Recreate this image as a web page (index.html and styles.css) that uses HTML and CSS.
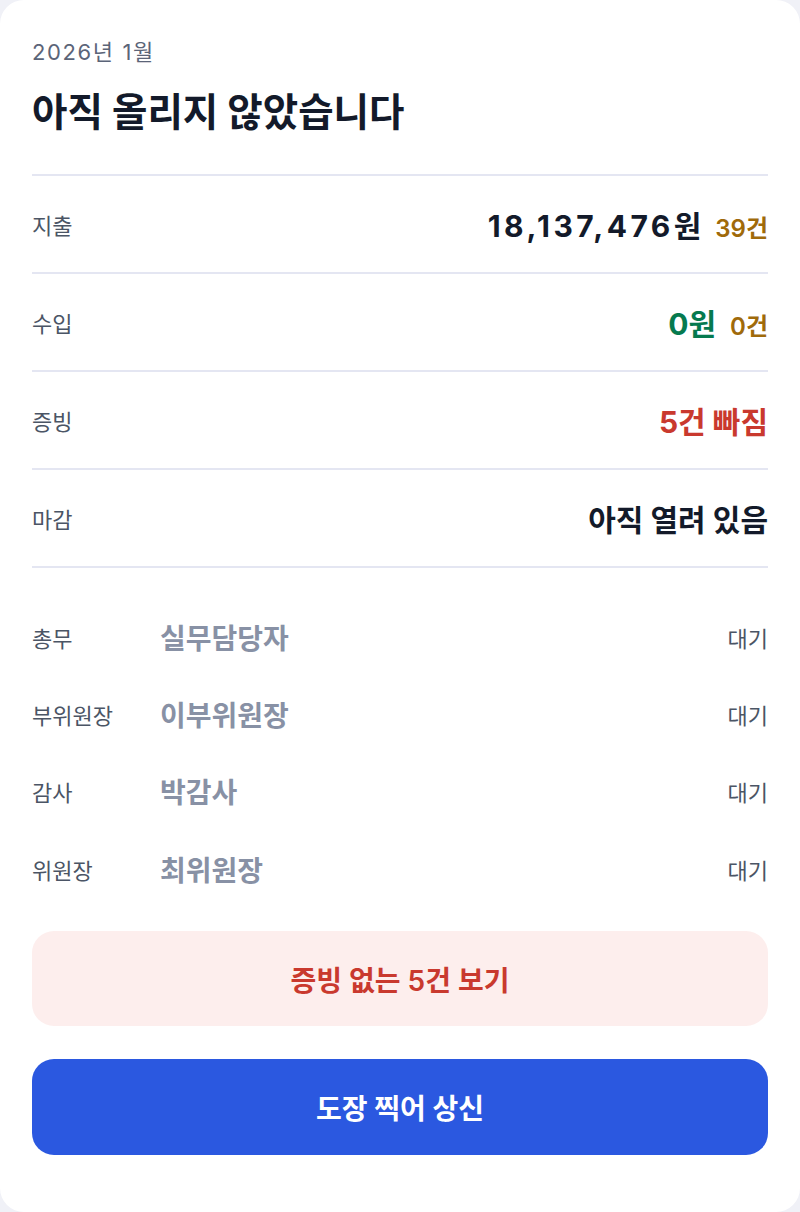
FILE: index.html
```html
<!DOCTYPE html>
<html lang="ko">
<head>
    <meta charset="UTF-8">
    <meta name="viewport" content="width=device-width, initial-scale=1.0">
    <title>2026년 1월 결산</title>
    <link rel="stylesheet" href="styles.css">
</head>
<body>
    <div class="card">
        <div class="header">
            <div class="period">2026년 1월</div>
            <h1 class="title">아직 올리지 않았습니다</h1>
        </div>

        <div class="summary">
            <div class="row">
                <span class="label">지출</span>
                <span class="value"><b class="amount"><span class="num">18,137,476</span>원</b><span class="count">39건</span></span>
            </div>
            <div class="row">
                <span class="label">수입</span>
                <span class="value"><b class="amount amount-in">0원</b><span class="count">0건</span></span>
            </div>
            <div class="row">
                <span class="label">증빙</span>
                <span class="value"><b class="amount amount-missing">5건 빠짐</b></span>
            </div>
            <div class="row">
                <span class="label">마감</span>
                <span class="value"><b class="amount">아직 열려 있음</b></span>
            </div>
        </div>

        <div class="approvals">
            <div class="step">
                <span class="role">총무</span>
                <span class="person">실무담당자</span>
                <span class="state">대기</span>
            </div>
            <div class="step">
                <span class="role">부위원장</span>
                <span class="person">이부위원장</span>
                <span class="state">대기</span>
            </div>
            <div class="step">
                <span class="role">감사</span>
                <span class="person">박감사</span>
                <span class="state">대기</span>
            </div>
            <div class="step">
                <span class="role">위원장</span>
                <span class="person">최위원장</span>
                <span class="state">대기</span>
            </div>
        </div>

        <div class="actions">
            <button class="btn btn-warn">증빙 없는 5건 보기</button>
            <button class="btn btn-primary">도장 찍어 상신</button>
        </div>
    </div>
</body>
</html>
```

FILE: styles.css
```css
body {
    margin: 0;
    background-color: #f0f1f7;
    font-family: Inter, "Noto Sans CJK KR", sans-serif;
    color: #111827;
}

.card {
    background-color: #fff;
    border-radius: 24px;
    padding: 38px 32px 56px;
    min-height: 1212px;
    box-sizing: border-box;
}

.header {
    padding-bottom: 38px;
    border-bottom: 2px solid #e4e6f2;
}

.period {
    font-size: 22px;
    line-height: 28px;
    letter-spacing: 1.6px;
    color: #5b6478;
}

.title {
    margin: 22px 0 0;
    font-size: 38.5px;
    line-height: 48px;
    font-weight: 700;
    color: #131a2a;
}

.row {
    display: flex;
    justify-content: space-between;
    align-items: center;
    height: 96px;
    border-bottom: 2px solid #e4e6f2;
}

.label {
    font-size: 22px;
    color: #4b5565;
}

.value {
    display: flex;
    align-items: baseline;
    gap: 14px;
}

.amount {
    font-size: 30px;
    font-weight: 700;
    color: #131a2a;
}

.num {
    letter-spacing: 3.4px;
}

.amount-in {
    color: #067a4f;
}

.amount-missing {
    color: #c9392e;
}

.count {
    font-size: 24px;
    font-weight: 600;
    color: #a06a0a;
}

.approvals {
    padding-top: 30px;
}

.step {
    display: grid;
    grid-template-columns: 128px 1fr auto;
    align-items: center;
    height: 77.33px;
}

.role {
    font-size: 22px;
    color: #4b5565;
}

.person {
    font-size: 28px;
    font-weight: 600;
    color: #8891a5;
}

.state {
    font-size: 22px;
    color: #4b5565;
}

.actions {
    display: flex;
    flex-direction: column;
    gap: 33px;
    margin-top: 24px;
}

.btn {
    border: none;
    border-radius: 22px;
    height: 95px;
    font-family: inherit;
    cursor: pointer;
}

.btn-warn {
    background-color: #fdeeed;
    color: #c9392e;
    font-size: 28px;
    font-weight: 600;
}

.btn-primary {
    background-color: #2b58e0;
    color: #fff;
    font-size: 28px;
    font-weight: 700;
    height: 96px;
}
```
